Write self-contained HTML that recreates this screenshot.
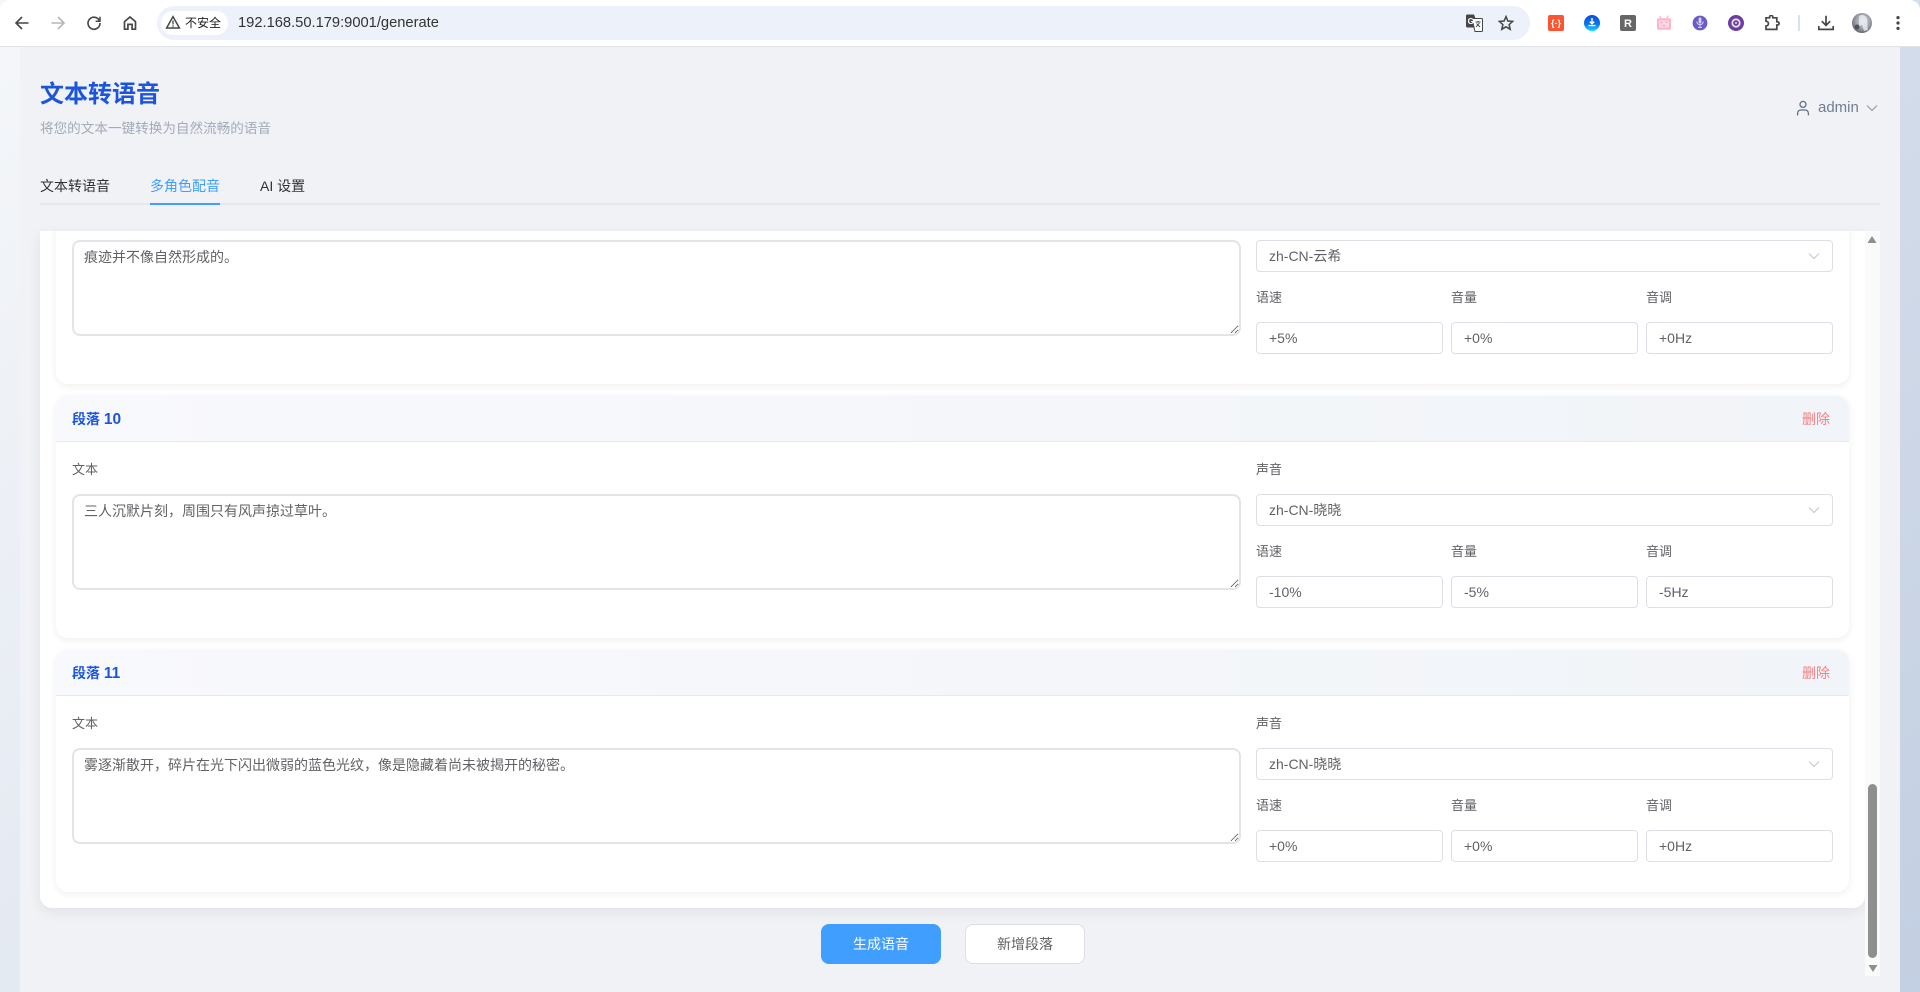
<!DOCTYPE html>
<html lang="zh-CN">
<head>
<meta charset="utf-8">
<title>文本转语音</title>
<style>
*{box-sizing:border-box;margin:0;padding:0}
html,body{width:1920px;height:992px;overflow:hidden}
body{position:relative;font-family:"Liberation Sans","Noto Sans CJK SC",sans-serif;background:linear-gradient(135deg,#f5f7fa 0%,#c3cfe2 100%)}
.chrome{position:absolute;left:0;top:0;width:1920px;height:47px;background:#fff;border-bottom:1px solid #e2e3e6;border-radius:10px 10px 0 0;z-index:5}
.ic{position:absolute}
.addr{position:absolute;left:157px;top:6px;width:1373px;height:34px;border-radius:17px;background:#ecf1fa}
.chip{position:absolute;left:161px;top:11px;width:67px;height:24px;border-radius:12px;background:#fff}
.chiptx{position:absolute;left:185px;top:14px;font-size:12px;line-height:18px;color:#202124}
.url{position:absolute;left:238px;top:13px;font-size:14.7px;line-height:20px;color:#333}
.main{position:absolute;left:20px;top:47px;width:1880px;height:945px;background:#f0f2f6}
h1{position:absolute;left:40px;top:78px;font-size:24px;line-height:34px;font-weight:700;color:#1c54dc}
.sub{position:absolute;left:40px;top:119px;font-size:13.6px;line-height:20px;color:#a3aab8;white-space:nowrap}
.user{position:absolute;left:1818px;top:98px;font-size:15px;line-height:20px;color:#6f7e94}
.tab{position:absolute;top:176px;font-size:14px;line-height:20px;color:#303133;white-space:nowrap}
.tab.on{color:#409eff}
.tabline{position:absolute;left:40px;top:203px;width:1840px;height:2px;background:#e4e7ed}
.tabact{position:absolute;left:150px;top:203px;width:70px;height:2px;background:#409eff}
.box{position:absolute;left:40px;top:231px;width:1825px;height:677px;background:#fff;border-radius:0 0 12px 12px;box-shadow:0 4px 14px rgba(0,0,0,.07);overflow:hidden}
.track{position:absolute;left:1865px;top:231px;width:15px;height:745px;background:#fafafa}
.thumb{position:absolute;left:1868px;top:784px;width:9px;height:174px;background:#8f8f8f;border-radius:5px}
.card{position:absolute;left:16px;width:1793px;height:242px;background:#fff;border-radius:12px;box-shadow:0 2px 8px rgba(0,0,0,.07);overflow:hidden}
.head{position:absolute;left:0;top:0;width:100%;height:46px;background:linear-gradient(90deg,#f8f9fc,#f1f4f8);border-bottom:1px solid #e6e9f0}
.head b{position:absolute;left:16px;top:13px;font-size:14px;line-height:20px;font-weight:700;color:#1c54dc}
.head b i{font-style:normal;font-size:15.5px}
.del{position:absolute;left:1746px;top:13px;font-size:14px;line-height:20px;color:#f67f7f}
.lab{position:absolute;font-size:13px;line-height:20px;color:#606266;white-space:nowrap}
textarea{position:absolute;left:16px;top:98px;width:1169px;height:96px;border:2px solid #e2e4ea;border-radius:8px;padding:5px 10px;font:14px/20px "Liberation Sans","Noto Sans CJK SC",sans-serif;color:#606266;outline:0;background:#fff}
.sel{position:absolute;left:1200px;top:98px;width:577px;height:32px;border:1px solid #dcdfe6;border-radius:4px;padding-left:12px;font-size:14px;line-height:30px;color:#606266}
.sel svg{position:absolute;left:551px;top:11px}
input{position:absolute;top:180px;width:187px;height:32px;border:1px solid #dcdfe6;border-radius:4px;padding:0 12px;font:14px "Liberation Sans","Noto Sans CJK SC",sans-serif;color:#606266;outline:0;background:#fff}
.btn{position:absolute;top:924px;width:120px;height:40px;border-radius:8px;font-size:14px;line-height:38px;text-align:center}
.b1{left:821px;background:#409eff;color:#fff;border:1px solid #409eff}
.b2{left:965px;background:#fff;color:#606266;border:1px solid #dcdfe6}
</style>
</head>
<body>
<div class="main"></div>

<div class="chrome">
<svg class="ic" style="left:14px;top:15px" width="16" height="16" viewBox="0 0 16 16" fill="none" stroke="#444746" stroke-width="1.6"><path d="M14.5 8H2M8 2 2 8l6 6"/></svg>
<svg class="ic" style="left:50px;top:15px" width="16" height="16" viewBox="0 0 16 16" fill="none" stroke="#b4b6b8" stroke-width="1.6"><path d="M1.5 8H14M8 2l6 6-6 6"/></svg>
<svg class="ic" style="left:86px;top:15px" width="16" height="16" viewBox="0 0 16 16" fill="none" stroke="#444746" stroke-width="1.6"><path d="M13.400 5.600A6 6 0 1 0 14 8"/><path d="M14 1.800v4.400H9.600" stroke-width="1.5"/></svg>
<svg class="ic" style="left:122px;top:15px" width="16" height="16" viewBox="0 0 16 16" fill="none" stroke="#444746" stroke-width="1.7"><path d="M2.500 14.200V6.600L8 2l5.500 4.600v7.600h-3.400V9.400H5.900v4.800z"/></svg>
<div class="addr"></div>
<div class="chip"></div>
<svg class="ic" style="left:165px;top:15px" width="16" height="15" viewBox="0 0 16 15" fill="none" stroke="#444746" stroke-width="1.500"><path d="M8 1.600 1.600 13h12.800z"/><path d="M8 5.500v4M8 10.400v1.400" stroke-width="1.300"/></svg>
<div class="chiptx">不安全</div>
<div class="url">192.168.50.179:9001/generate</div>
<svg class="ic" style="left:1465px;top:14px" width="18" height="18" viewBox="0 0 18 18"><path d="M1 1.500A1.200 1.200 0 0 1 2.200.5H9l5 13H2.200A1.200 1.200 0 0 1 1 12.300z" fill="#444746"/><path d="M7 4.500h9.500a1 1 0 0 1 1 1v11a1 1 0 0 1-1 1H10z" fill="#fff" stroke="#444746" stroke-width="1"/><text x="2.600" y="10" font-size="8" font-weight="700" fill="#fff" font-family="Liberation Sans">G</text><path d="M10.500 8h5M13 7v1M11 13l3.500-4M11.500 9.500l3.500 3.500" stroke="#444746" stroke-width=".9" fill="none"/></svg>
<svg class="ic" style="left:1498px;top:15px" width="16" height="16" viewBox="0 0 16 16" fill="none" stroke="#444746" stroke-width="1.500"><path d="M8 1.600 9.900 6l4.800.4-3.600 3.200 1.100 4.700L8 11.800l-4.200 2.500 1.100-4.700L1.300 6.400 6.100 6z"/></svg>
<svg class="ic" style="left:1548px;top:15px" width="16" height="16" viewBox="0 0 16 16"><rect width="16" height="16" rx="2" fill="#fb5531"/><text x="8" y="11.200" font-size="9" font-weight="700" text-anchor="middle" fill="#fff" font-family="Liberation Sans">{-}</text></svg>
<svg class="ic" style="left:1584px;top:15px" width="16" height="16" viewBox="0 0 16 16"><defs><linearGradient id="bg" x1="0" y1="0" x2="0" y2="1"><stop offset="0" stop-color="#0a4fd8"/><stop offset=".6" stop-color="#0a78ee"/><stop offset="1" stop-color="#14dcff"/></linearGradient></defs><circle cx="8" cy="8" r="8" fill="url(#bg)"/><path d="M8 3v5.400M5.800 6.600 8 8.800l2.200-2.200M4.400 10.600h7.200" stroke="#fff" stroke-width="1.400" fill="none"/></svg>
<svg class="ic" style="left:1620px;top:15px" width="16" height="16" viewBox="0 0 16 16"><rect width="16" height="16" rx="2" fill="#666"/><text x="8" y="12.200" font-size="11" font-weight="700" text-anchor="middle" fill="#fff" font-family="Liberation Sans">R</text></svg>
<svg class="ic" style="left:1656px;top:15px" width="16" height="16" viewBox="0 0 16 16"><path d="M5 3.200 3.600.8M10.600 3.200 12.400.6" stroke="#ffb4ca" stroke-width="1.200"/><rect x="1" y="3.200" width="14" height="11.600" rx="1.600" fill="#ffb4ca"/><rect x="3" y="5.500" width="10" height="7" fill="#ffdbe5"/><path d="M4.500 7.500h2M9.500 7.500h2M6.500 10.500h3" stroke="#ff9ebb" stroke-width="1.200"/></svg>
<svg class="ic" style="left:1692px;top:15px" width="16" height="16" viewBox="0 0 16 16"><circle cx="8" cy="8" r="7.400" fill="#6a5cc8"/><rect x="6.600" y="2.500" width="2.800" height="6" rx="1.400" fill="#d8d4f4"/><path d="M4.800 6.500a3.200 3.200 0 0 0 6.400 0M8 9.800v2.400M6 12.400h4" stroke="#d8d4f4" stroke-width="1" fill="none"/></svg>
<svg class="ic" style="left:1728px;top:15px" width="16" height="16" viewBox="0 0 16 16"><circle cx="8" cy="8" r="8" fill="#6b3fa0"/><circle cx="8" cy="8" r="4.600" fill="#e8dff3"/><circle cx="8" cy="8" r="2.800" fill="#6b3fa0"/><circle cx="8" cy="8" r="1" fill="#e8dff3"/></svg>
<svg class="ic" style="left:1764px;top:15px" width="16" height="16" viewBox="0 0 16 16" fill="none" stroke="#444746" stroke-width="1.700"><path d="M2 2.800h3.600V2a1.600 1.600 0 0 1 3.200 0v.8h4v4h.7a1.600 1.600 0 0 1 0 3.200h-.7v4.400H2V11a2.400 2.400 0 0 0 0-4.800z"/></svg>
<div class="ic" style="left:1798px;top:15px;width:2px;height:16px;background:#d3e2f7"></div>
<svg class="ic" style="left:1818px;top:15px" width="16" height="16" viewBox="0 0 16 16" fill="none" stroke="#444746" stroke-width="1.700"><path d="M8 .8v9.400M3.800 6.200 8 10.400l4.200-4.200M.8 11v3.400h14.400V11"/></svg>
<svg class="ic" style="left:1852px;top:13px" width="20" height="20" viewBox="0 0 20 20"><defs><radialGradient id="av" cx=".55" cy=".4" r=".7"><stop offset="0" stop-color="#dcdde2"/><stop offset=".55" stop-color="#989ba4"/><stop offset="1" stop-color="#52565e"/></radialGradient></defs><circle cx="10" cy="10" r="10" fill="url(#av)"/><path d="M7 3c3-2 7-1 8 3 1 3 0 7 1 11l-4 1-2-6-3 1z" fill="#eef0f3" opacity=".75"/><circle cx="5" cy="14" r="2.500" fill="#4e525a"/></svg>
<svg class="ic" style="left:1896px;top:15px" width="4" height="16" viewBox="0 0 4 16" fill="#444746"><circle cx="2" cy="2.600" r="1.600"/><circle cx="2" cy="8" r="1.600"/><circle cx="2" cy="13.400" r="1.600"/></svg>
</div>

<h1>文本转语音</h1>
<div class="sub">将您的文本一键转换为自然流畅的语音</div>
<svg class="ic" style="left:1795px;top:100px" width="16" height="16" viewBox="0 0 16 16" fill="none" stroke="#5f6e85" stroke-width="1.300"><circle cx="8" cy="4.400" r="3"/><path d="M2.600 15.400v-2.200A3.200 3.200 0 0 1 5.800 10h4.400a3.200 3.200 0 0 1 3.200 3.200v2.200"/></svg>
<div class="user">admin</div>
<svg class="ic" style="left:1866px;top:104px" width="12" height="8" viewBox="0 0 12 8" fill="none" stroke="#8a94a6" stroke-width="1"><path d="M1 1.500 6 6.500l5-5"/></svg>

<div class="tab" style="left:40px">文本转语音</div>
<div class="tab on" style="left:150px">多角色配音</div>
<div class="tab" style="left:260px">AI 设置</div>
<div class="tabline"></div>
<div class="tabact"></div>

<div class="box">
  <div class="card" style="top:-89px">
    <div class="head"><b>段落 <i>9</i></b><span class="del">删除</span></div>
    <div class="lab" style="left:16px;top:64px">文本</div>
    <div class="lab" style="left:1200px;top:64px">声音</div>
    <textarea>痕迹并不像自然形成的。</textarea>
    <div class="sel">zh-CN-云希<svg width="12" height="8" viewBox="0 0 12 8" fill="none" stroke="#c0c4cc" stroke-width="1"><path d="M1 1.500 6 6.500l5-5"/></svg></div>
    <div class="lab" style="left:1200px;top:146px">语速</div>
    <div class="lab" style="left:1395px;top:146px">音量</div>
    <div class="lab" style="left:1590px;top:146px">音调</div>
    <input style="left:1200px" value="+5%">
    <input style="left:1395px" value="+0%">
    <input style="left:1590px" value="+0Hz">
  </div>
  <div class="card" style="top:165px">
    <div class="head"><b>段落 <i>10</i></b><span class="del">删除</span></div>
    <div class="lab" style="left:16px;top:64px">文本</div>
    <div class="lab" style="left:1200px;top:64px">声音</div>
    <textarea>三人沉默片刻，周围只有风声掠过草叶。</textarea>
    <div class="sel">zh-CN-晓晓<svg width="12" height="8" viewBox="0 0 12 8" fill="none" stroke="#c0c4cc" stroke-width="1"><path d="M1 1.500 6 6.500l5-5"/></svg></div>
    <div class="lab" style="left:1200px;top:146px">语速</div>
    <div class="lab" style="left:1395px;top:146px">音量</div>
    <div class="lab" style="left:1590px;top:146px">音调</div>
    <input style="left:1200px" value="-10%">
    <input style="left:1395px" value="-5%">
    <input style="left:1590px" value="-5Hz">
  </div>
  <div class="card" style="top:419px">
    <div class="head"><b>段落 <i>11</i></b><span class="del">删除</span></div>
    <div class="lab" style="left:16px;top:64px">文本</div>
    <div class="lab" style="left:1200px;top:64px">声音</div>
    <textarea>雾逐渐散开，碎片在光下闪出微弱的蓝色光纹，像是隐藏着尚未被揭开的秘密。</textarea>
    <div class="sel">zh-CN-晓晓<svg width="12" height="8" viewBox="0 0 12 8" fill="none" stroke="#c0c4cc" stroke-width="1"><path d="M1 1.500 6 6.500l5-5"/></svg></div>
    <div class="lab" style="left:1200px;top:146px">语速</div>
    <div class="lab" style="left:1395px;top:146px">音量</div>
    <div class="lab" style="left:1590px;top:146px">音调</div>
    <input style="left:1200px" value="+0%">
    <input style="left:1395px" value="+0%">
    <input style="left:1590px" value="+0Hz">
  </div>
</div>

<div class="track"></div>
<div class="thumb"></div>
<svg class="ic" style="left:1867px;top:236px" width="10" height="7" viewBox="0 0 10 7" fill="#8f8f8f"><path d="M5 0l4.500 7H.5z"/></svg>
<svg class="ic" style="left:1868px;top:965px" width="10" height="7" viewBox="0 0 10 7" fill="#8f8f8f"><path d="M.5 0h9L5 7z"/></svg>

<div class="btn b1">生成语音</div>
<div class="btn b2">新增段落</div>
</body>
</html>
